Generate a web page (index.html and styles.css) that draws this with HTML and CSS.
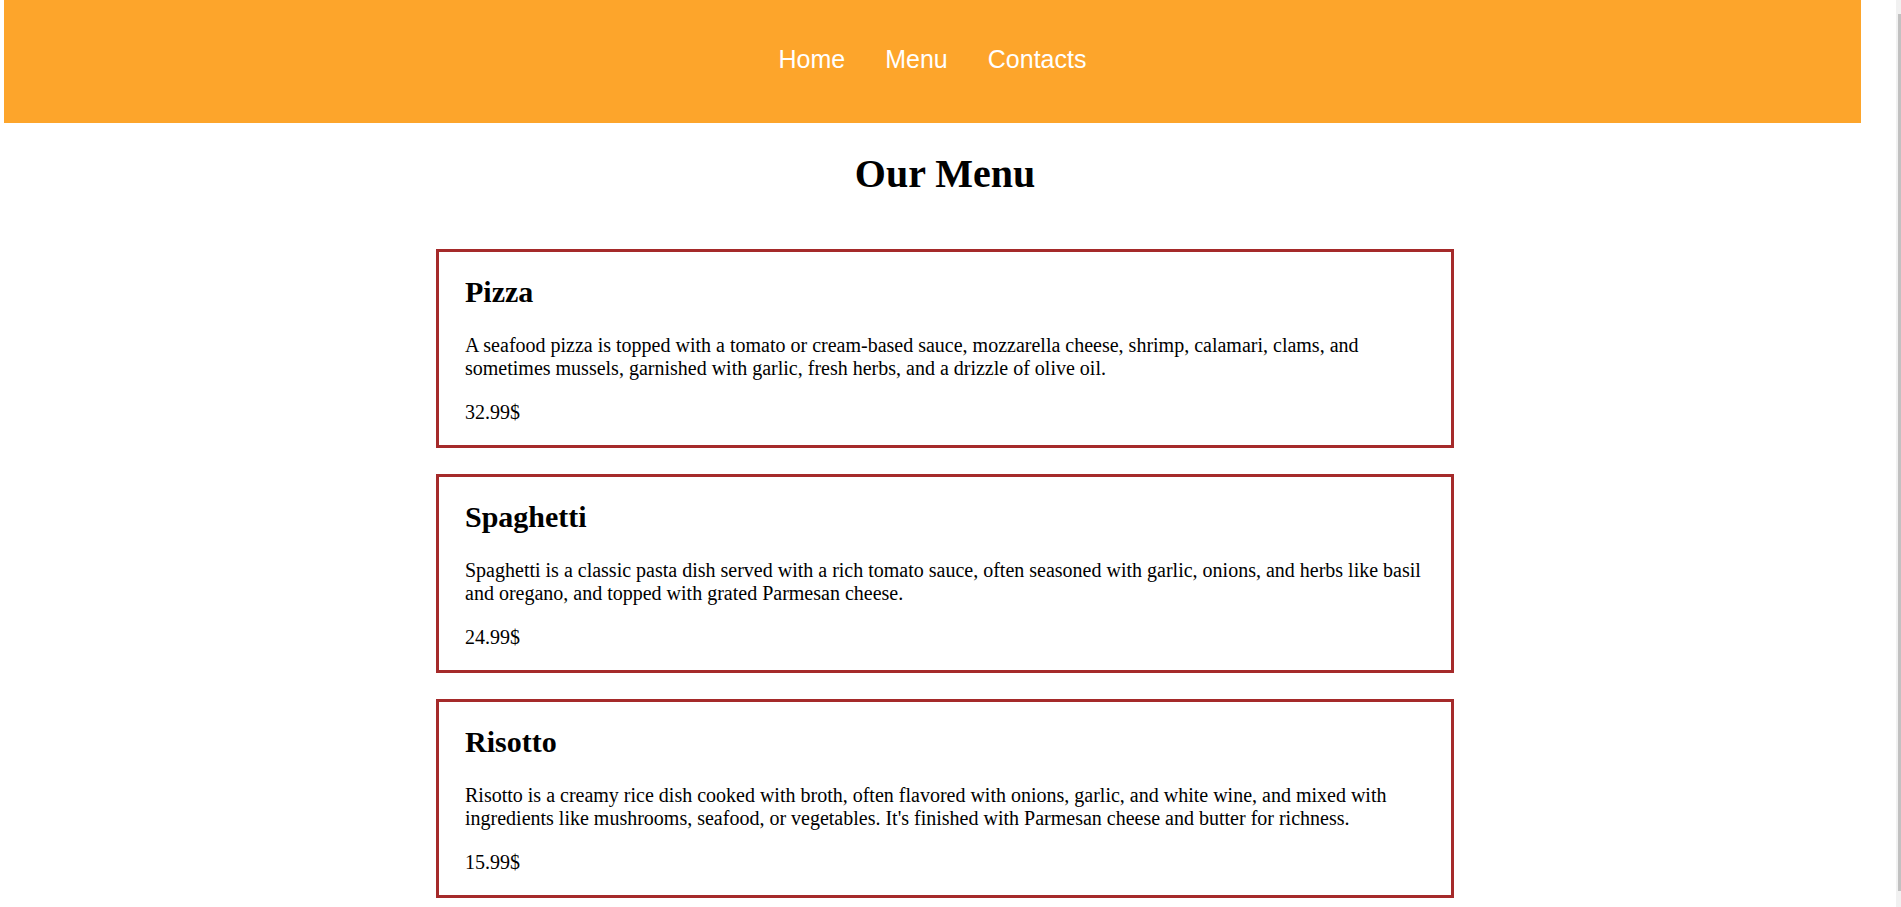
FILE: index.html
```html
<!DOCTYPE html>
<html lang="en">
<head>
<meta charset="utf-8">
<title>Our Menu</title>
<link rel="stylesheet" href="styles.css">
</head>
<body>
<header class="site-header">
  <nav class="site-nav">
    <a class="nav-link" href="#">Home</a>
    <a class="nav-link" href="#">Menu</a>
    <a class="nav-link" href="#">Contacts</a>
  </nav>
</header>
<main class="page">
  <h1 class="page-title">Our Menu</h1>
  <section class="menu-list">
    <article class="menu-card">
      <h3 class="dish-name">Pizza</h3>
      <p class="dish-desc">A seafood pizza is topped with a tomato or cream-based sauce, mozzarella cheese, shrimp, calamari, clams, and sometimes mussels, garnished with garlic, fresh herbs, and a drizzle of olive oil.</p>
      <p class="dish-price">32.99$</p>
    </article>
    <article class="menu-card">
      <h3 class="dish-name">Spaghetti</h3>
      <p class="dish-desc">Spaghetti is a classic pasta dish served with a rich tomato sauce, often seasoned with garlic, onions, and herbs like basil and oregano, and topped with grated Parmesan cheese.</p>
      <p class="dish-price">24.99$</p>
    </article>
    <article class="menu-card">
      <h3 class="dish-name">Risotto</h3>
      <p class="dish-desc">Risotto is a creamy rice dish cooked with broth, often flavored with onions, garlic, and white wine, and mixed with ingredients like mushrooms, seafood, or vegetables. It's finished with Parmesan cheese and butter for richness.</p>
      <p class="dish-price">15.99$</p>
    </article>
  </section>
</main>
<div class="scroll-rail" aria-hidden="true"><div class="scroll-thumb"></div></div>
</body>
</html>
```

FILE: styles.css
```css
html, body {
  margin: 0;
  padding: 0;
}

body {
  font-family: "Liberation Serif", "Times New Roman", serif;
  font-size: 20px;
  color: #000;
  background: #fff;
}

.site-header {
  margin-left: 4px;
  width: 1857px;
  height: 119px;
  padding-bottom: 4px;
  background: #fda52b;
  display: flex;
  align-items: center;
  justify-content: center;
}

.site-nav {
  display: flex;
  gap: 40px;
}

.nav-link {
  font-family: "Liberation Sans", Arial, sans-serif;
  font-size: 25px;
  color: #fff;
  text-decoration: none;
}

.page {
  padding: 0 19px 10px 8px;
}

.page-title {
  font-size: 40px;
  font-weight: bold;
  text-align: center;
  margin: 27px 0 0;
}

.menu-list {
  display: flex;
  flex-direction: column;
  align-items: center;
  gap: 26px;
  padding-top: 52px;
}

.menu-card {
  width: 962px;
  border: 3px solid #a52a2a;
  padding: 23px 24px 21px 26px;
}

.dish-name {
  font-size: 30px;
  font-weight: bold;
  margin: 0 0 25px;
}

.dish-desc {
  margin: 0 0 21px;
}

.dish-price {
  margin: 0;
}

.scroll-rail {
  position: fixed;
  top: 0;
  right: 0;
  width: 5px;
  height: 100vh;
  background: #f1f1f1;
  padding: 14px 0 16px 2px;
  box-sizing: border-box;
}

.scroll-thumb {
  height: 100%;
  background: #c1c1c1;
}
```
